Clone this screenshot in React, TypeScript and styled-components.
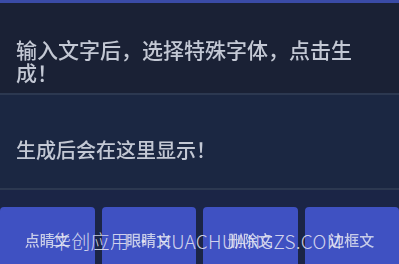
import React from "react";
import styled, { createGlobalStyle } from "styled-components";

const Global = createGlobalStyle`
  html, body { margin: 0; padding: 0; background: #1a2135; }
  body { width: 399px; height: 264px; overflow: hidden; }
  #root { width: 399px; height: 264px; }
`;

const Screen = styled.div`
  position: relative;
  width: 399px;
  height: 264px;
  overflow: hidden;
  background: #1a2135;
  font-family: "Noto Sans CJK SC", "Noto Sans", sans-serif;
`;

const Content = styled.div`
  display: flex;
  flex-direction: column;
  height: 100%;
  filter: blur(0.6px);
`;

const TopBar = styled.div`
  height: 3px;
  background: #3a4ba6;
  flex: none;
`;

const Panel = styled.div<{ $h: number; $pt: number; $bg: string; $fs: number }>`
  flex: none;
  box-sizing: border-box;
  height: ${(p) => p.$h}px;
  padding: ${(p) => p.$pt}px 40px 0 16px;
  background: ${(p) => p.$bg};
  border-bottom: 2px solid #2c3850;
  color: #c3c8d4;
  font-size: ${(p) => p.$fs}px;
  line-height: 23px;
  font-weight: 500;
`;

const ButtonRow = styled.div`
  flex: 1;
  display: grid;
  grid-template-columns: repeat(4, 1fr);
  gap: 7px;
  padding-top: 17px;
  background: #1b2546;
`;

const FontButton = styled.div`
  height: 70px;
  border-radius: 4px;
  background: #3f51c2;
  color: #c7cce8;
  font-size: 15px;
  font-weight: 500;
  display: flex;
  justify-content: center;
  padding-top: 22px;
  box-sizing: border-box;
`;

const Watermark = styled.div`
  position: absolute;
  left: 52px;
  top: 227px;
  color: rgba(235, 235, 245, 0.85);
  font-family: "Noto Sans CJK SC", "Liberation Sans", sans-serif;
  font-size: 19px;
  font-weight: 300;
  white-space: nowrap;
  letter-spacing: 0.3px;
`;

const labels = ["点睛文", "眼睛文", "删除文", "边框文"];

export default function App() {
  return (
    <>
      <Global />
      <Screen>
        <Content>
          <TopBar />
          <Panel $h={92} $pt={35} $bg="#1a2135" $fs={21}>
            输入文字后，选择特殊字体，点击生成！
          </Panel>
          <Panel $h={95} $pt={43} $bg="#1b2742" $fs={20}>
            生成后会在这里显示！
          </Panel>
          <ButtonRow>
            {labels.map((l) => (
              <FontButton key={l}>{l}</FontButton>
            ))}
          </ButtonRow>
        </Content>
        <Watermark>华创应用 • HUACHUANGZS.COM</Watermark>
      </Screen>
    </>
  );
}
